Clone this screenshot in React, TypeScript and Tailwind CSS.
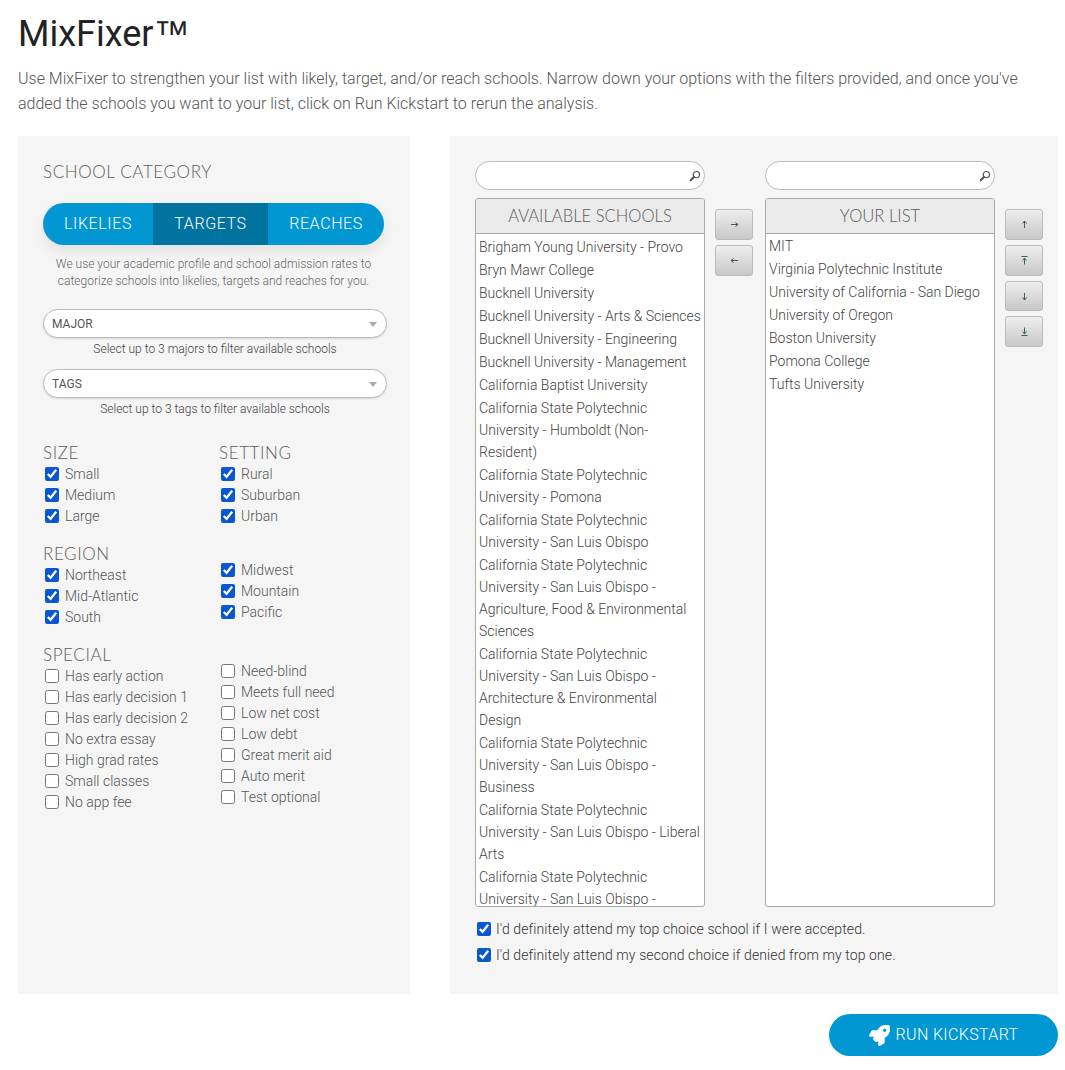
import { FaRocket } from "react-icons/fa";

const AVAILABLE = [
  "Brigham Young University - Provo",
  "Bryn Mawr College",
  "Bucknell University",
  "Bucknell University - Arts & Sciences",
  "Bucknell University - Engineering",
  "Bucknell University - Management",
  "California Baptist University",
  "California State Polytechnic University - Humboldt (Non-Resident)",
  "California State Polytechnic University - Pomona",
  "California State Polytechnic University - San Luis Obispo",
  "California State Polytechnic University - San Luis Obispo - Agriculture, Food & Environmental Sciences",
  "California State Polytechnic University - San Luis Obispo - Architecture & Environmental Design",
  "California State Polytechnic University - San Luis Obispo - Business",
  "California State Polytechnic University - San Luis Obispo - Liberal Arts",
  "California State Polytechnic University - San Luis Obispo - Science & Mathematics",
];

const MY_LIST = [
  "MIT",
  "Virginia Polytechnic Institute",
  "University of California - San Diego",
  "University of Oregon",
  "Boston University",
  "Pomona College",
  "Tufts University",
];

const HEADING = "font-['Lato',sans-serif] font-light tracking-[0.6px] text-[#5c5c5c]";

function Check({ label, checked }: { label: string; checked?: boolean }) {
  return (
    <label className="flex h-[21px] items-center">
      <input type="checkbox" defaultChecked={checked} className="mr-[6px] mb-[2px] ml-[2px] h-[14px] w-[14px] accent-[#0b57d0]" />
      <span className="text-[14px] font-light text-[#555]">{label}</span>
    </label>
  );
}

function CheckGroup({ title, left, right, checked }: { title: string; left: string[]; right: string[]; checked?: boolean }) {
  return (
    <div className="grid grid-cols-[176px_1fr]">
      <div>
        <div className={`${HEADING} h-[22px] text-[17px] leading-[22px]`}>{title}</div>
        {left.map((item) => (
          <Check key={item} label={item} checked={checked} />
        ))}
      </div>
      <div className="pt-[17px]">
        {right.map((item) => (
          <Check key={item} label={item} checked={checked} />
        ))}
      </div>
    </div>
  );
}

function FilterSelect({ label, hint }: { label: string; hint: string }) {
  return (
    <div className="w-[344px]">
      <div className="flex h-[29px] items-center justify-between rounded-[15px] border border-[#bbb] bg-white pr-[9px] pl-[8px] shadow-[0_1px_2px_rgba(0,0,0,0.12)]">
        <span className="text-[12px] text-[#555]">{label}</span>
        <span className="mt-[2px] h-0 w-0 border-x-[4px] border-t-[5px] border-x-transparent border-t-[#aaa]" />
      </div>
      <p className="mt-[1px] text-center text-[12px] leading-[20px] font-light text-[#444]">{hint}</p>
    </div>
  );
}

function SearchBox() {
  return (
    <div className="flex h-[29px] w-[230px] items-center justify-end rounded-[15px] border border-[#bbb] bg-white pr-[3px]">
      <svg width="12" height="12" viewBox="0 0 13 13" fill="none">
        <circle cx="8" cy="5" r="3.4" stroke="#555" strokeWidth="1.3" />
        <path d="M5.4 7.6 1.8 11.2" stroke="#555" strokeWidth="2.2" strokeLinecap="round" />
      </svg>
    </div>
  );
}

function ListBox({ title, items, top }: { title: string; items: string[]; top: string }) {
  return (
    <div className="h-[709px] w-[230px] overflow-hidden rounded-[3px] border border-[#aaa] bg-white">
      <div className={`${HEADING} flex h-[35px] items-center justify-center border-b border-[#aaa] bg-[#ebebeb] text-[16.6px] tracking-normal`}>{title}</div>
      <ul className={top}>
        {items.map((item) => (
          <li key={item} className="py-[0.5px] pr-[3px] pl-[3px] text-[14px] leading-[22px] font-light text-[#444]">
            {item}
          </li>
        ))}
      </ul>
    </div>
  );
}

function MoveButton({ d, h = "h-[31px]" }: { d: string; h?: string }) {
  return (
    <button className={`flex ${h} w-[38px] items-center justify-center rounded-[3px] border border-[#bbb] bg-gradient-to-b from-[#eeeeee] to-[#c8c8c8]`}>
      <svg width="9" height="9" viewBox="0 0 9 9" fill="none" stroke="#3f5b68" strokeWidth="1">
        <path d={d} />
      </svg>
    </button>
  );
}

export default function App() {
  return (
    <div className="h-[1070px] bg-white pr-[7px] pl-[18px] font-['Roboto',sans-serif]">
      <h1 className="pt-[12px] text-[36px] leading-[44px] text-[#222]">
        MixFixer<span className="font-['Liberation_Sans',sans-serif]">™</span>
      </h1>
      <p className="mt-[10px] text-[16px] leading-[25px] font-light text-[#555]">
        Use MixFixer to strengthen your list with likely, target, and/or reach schools. Narrow down your options with the filters provided, and once you've added the schools you want to your list, click on Run Kickstart to rerun the analysis.
      </p>

      <div className="mt-[20px] flex h-[858px] gap-[40px]">
        {/* filters */}
        <div className="w-[392px] bg-[#f5f5f5] pt-[25px] pl-[25px]">
          <h2 className={`${HEADING} text-[17px] leading-[22px]`}>SCHOOL CATEGORY</h2>
          <div className="mt-[20px] flex h-[42px] w-[341px] overflow-hidden rounded-[21px] bg-[#0097d3] text-[16px] font-light tracking-[0.6px] text-white shadow-[0_6px_14px_rgba(0,0,0,0.08)]">
            <div className="flex w-[110px] items-center justify-center">LIKELIES</div>
            <div className="flex w-[115px] items-center justify-center bg-[#0073a1]">TARGETS</div>
            <div className="flex w-[116px] items-center justify-center">REACHES</div>
          </div>
          <p className="mt-[11px] w-[341px] text-center text-[12px] leading-[17px] font-light text-[#666]">
            We use your academic profile and school admission rates to categorize schools into likelies, targets and reaches for you.
          </p>
          <div className="mt-[19px] flex flex-col gap-[10px]">
            <FilterSelect label="MAJOR" hint="Select up to 3 majors to filter available schools" />
            <FilterSelect label="TAGS" hint="Select up to 3 tags to filter available schools" />
          </div>
          <div className="mt-[23px] flex w-[344px] flex-col gap-[16px]">
            <div className="grid grid-cols-[176px_1fr]">
              <div>
                <div className={`${HEADING} h-[22px] text-[17px] leading-[22px]`}>SIZE</div>
                {["Small", "Medium", "Large"].map((item) => (
                  <Check key={item} label={item} checked />
                ))}
              </div>
              <div>
                <div className={`${HEADING} h-[22px] text-[17px] leading-[22px]`}>SETTING</div>
                {["Rural", "Suburban", "Urban"].map((item) => (
                  <Check key={item} label={item} checked />
                ))}
              </div>
            </div>
            <CheckGroup title="REGION" left={["Northeast", "Mid-Atlantic", "South"]} right={["Midwest", "Mountain", "Pacific"]} checked />
            <CheckGroup
              title="SPECIAL"
              left={["Has early action", "Has early decision 1", "Has early decision 2", "No extra essay", "High grad rates", "Small classes", "No app fee"]}
              right={["Need-blind", "Meets full need", "Low net cost", "Low debt", "Great merit aid", "Auto merit", "Test optional"]}
            />
          </div>
        </div>

        {/* school lists */}
        <div className="w-[608px] bg-[#f5f5f5] pt-[25px] pl-[25px]">
          <div className="flex gap-[60px]">
            <SearchBox />
            <SearchBox />
          </div>
          <div className="mt-[8px] flex">
            <ListBox title="AVAILABLE SCHOOLS" items={AVAILABLE} top="pt-[1px]" />
            <div className="flex w-[60px] flex-col items-start gap-[5px] pt-[11px] pl-[10px]">
              <MoveButton d="M1 4.5h7M5.5 2.5l2.5 2-2.5 2" />
              <MoveButton d="M8 4.5H1M3.5 2.5l-2.5 2 2.5 2" />
            </div>
            <ListBox title="YOUR LIST" items={MY_LIST} top="pt-0" />
            <div className="ml-[10px] flex flex-col gap-[5px] pt-[11px]">
              <MoveButton d="M4.5 8V1M2.5 3.5l2-2.5 2 2.5" />
              <MoveButton d="M1.5.5h6M4.5 8.5V2.5M2.5 4.5l2-2.5 2 2.5" />
              <MoveButton h="h-[30px]" d="M4.5 1v7M2.5 5.5l2 2.5 2-2.5" />
              <MoveButton d="M1.5 8.5h6M4.5.5v6M2.5 4.5l2 2.5 2-2.5" />
            </div>
          </div>
          <div className="mt-[12px] flex flex-col gap-[5px]">
            {["I'd definitely attend my top choice school if I were accepted.", "I'd definitely attend my second choice if denied from my top one."].map((text) => (
              <label key={text} className="flex h-[21px] items-center">
                <input type="checkbox" defaultChecked className="mr-[5px] mb-[2px] ml-[2px] h-[14px] w-[14px] accent-[#0b57d0]" />
                <span className="text-[14px] font-light tracking-[0.1px] text-[#333]">{text}</span>
              </label>
            ))}
          </div>
        </div>
      </div>

      <div className="mt-[20px] flex justify-end">
        <button className="flex h-[42px] w-[229px] items-center justify-center gap-[6px] rounded-[21px] bg-[#0097d3] text-[16px] font-light tracking-[0.35px] text-white">
          <FaRocket className="h-[21px] w-[21px]" />
          RUN KICKSTART
        </button>
      </div>
    </div>
  );
}
